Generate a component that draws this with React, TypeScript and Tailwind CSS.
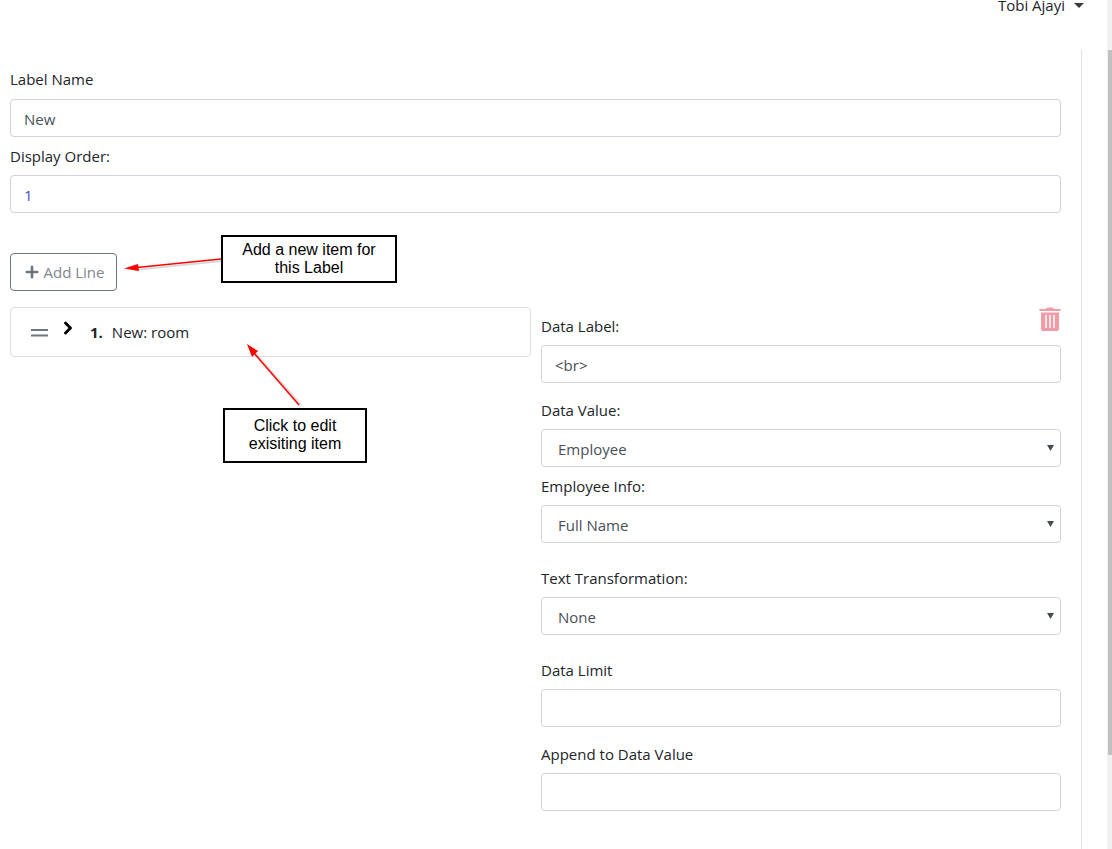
import { ChevronRight, Plus } from 'lucide-react'

const FONT = "font-['Open_Sans','Noto_Sans',sans-serif]"

function TextField({ value, className = '', valueClass = 'text-[#495057]' }: { value?: string; className?: string; valueClass?: string }) {
  return (
    <div className={`flex h-[38px] items-center rounded border border-[#ced4da] bg-white px-[13px] pt-[2px] text-[15px] ${valueClass} ${className}`}>
      {value}
    </div>
  )
}

function SelectField({ value, className = '' }: { value: string; className?: string }) {
  return (
    <div className={`flex h-[38px] items-center justify-between rounded border border-[#ced4da] bg-white pl-4 pr-[6px] text-[15px] text-[#495057] ${className}`}>
      <span className="pt-[2px]">{value}</span>
      <svg width="7" height="6" viewBox="0 0 7 6">
        <path d="M0 0h7L3.500 6z" fill="#444b52" />
      </svg>
    </div>
  )
}

function FieldLabel({ children, className = '' }: { children: string; className?: string }) {
  return <div className={`h-[22px] text-[15px] leading-[22px] text-[#212529] ${className}`}>{children}</div>
}

function Callout({ lines, className }: { lines: string[]; className: string }) {
  return (
    <div className={`absolute flex flex-col items-center justify-center border-2 border-black bg-white font-['Liberation_Sans',sans-serif] text-[16px] leading-[18px] text-black ${className}`}>
      {lines.map((line) => (
        <span key={line}>{line}</span>
      ))}
    </div>
  )
}

export default function App() {
  return (
    <div className={`relative h-[849px] overflow-hidden bg-white ${FONT}`}>
      {/* Page scrollbar */}
      <div className="absolute bottom-0 right-0 top-0 w-[5px] bg-[#f1f1f1]">
        <div className="absolute bottom-[94px] right-0 top-[50px] w-[4px] bg-[#c1c1c1]" />
      </div>

      {/* User menu */}
      <div className="flex h-[50px] justify-end pr-[28px]">
        <div className="-mt-[6px] flex h-[22px] items-center gap-[9px] text-[15px] text-[#212529]">
          <span>Tobi Ajayi</span>
          <svg width="10" height="5" viewBox="0 0 10 5">
            <path d="M0 0h10L5 5z" fill="#343a40" />
          </svg>
        </div>
      </div>

      <div className="mr-[30px] h-[799px] border-r border-[#dee2e6] pl-[10px] pr-5 pt-[18px]">
        {/* Label fields */}
        <FieldLabel>Label Name</FieldLabel>
        <TextField value="New" className="mt-[9px]" />
        <FieldLabel className="mt-2">Display Order:</FieldLabel>
        <TextField value="1" className="mt-2" valueClass="text-[#3f51b5]" />

        <button className="mt-10 flex h-[38px] w-[107px] items-center justify-center gap-[3px] rounded border border-[#6c757d] text-[15px] text-[#7f868d]">
          <Plus size={18} strokeWidth={3.5} className="text-[#6c757d]" />
          Add Line
        </button>

        <div className="mt-4 flex gap-[10px]">
          {/* Existing lines */}
          <div className="flex h-[50px] w-[521px] shrink-0 items-center rounded border border-[#dfdfdf] pl-5 text-[15px] text-[#212529]">
            <svg width="18" height="8" viewBox="0 0 18 8" className="mt-[2px]">
              <path d="M0 1h17M0 6.500h17" stroke="#6c757d" strokeWidth="2" />
            </svg>
            <ChevronRight size={20} strokeWidth={3.5} className="mb-[9px] ml-[9px] text-black" />
            <span className="ml-3 font-bold">1.</span>
            <span className="ml-[9px]">New: room</span>
          </div>

          {/* Line editor */}
          <div className="relative w-[520px] shrink-0 pt-2">
            <svg width="22" height="24" viewBox="0 0 22 24" className="absolute right-0 top-0">
              <path d="M8 0.500h6l1 1.500h6.500v2H0.500V2H7zM2 5.500h18V22a2 2 0 0 1-2 2H4a2 2 0 0 1-2-2z" fill="#f29aa5" />
              <path d="M7 8v13M11 8v13M15 8v13" stroke="#fff" strokeWidth="1.500" />
            </svg>
            <FieldLabel>Data Label:</FieldLabel>
            <TextField value="<br>" className="mt-2" />
            <FieldLabel className="mt-[16px]">Data Value:</FieldLabel>
            <SelectField value="Employee" className="mt-2" />
            <FieldLabel className="mt-2">Employee Info:</FieldLabel>
            <SelectField value="Full Name" className="mt-2" />
            <FieldLabel className="mt-6">Text Transformation:</FieldLabel>
            <SelectField value="None" className="mt-2" />
            <FieldLabel className="mt-6">Data Limit</FieldLabel>
            <TextField className="mt-2" />
            <FieldLabel className="mt-4">Append to Data Value</FieldLabel>
            <TextField className="mt-2" />
          </div>
        </div>
      </div>

      {/* Annotations */}
      <svg width="320" height="180" viewBox="0 0 320 180" className="absolute left-[110px] top-[250px]">
        <path d="M112 11L24 20" stroke="#000" strokeOpacity="0.15" strokeWidth="2" />
        <path d="M191 155L146 104" stroke="#000" strokeOpacity="0.15" strokeWidth="2" />
        <path d="M111 9L22 18" stroke="#f00" strokeWidth="1.500" />
        <path d="M14 18.500L28 14L29 21z" fill="#f00" />
        <path d="M189 155L143 102" stroke="#f00" strokeWidth="1.500" />
        <path d="M137 94L148 101L142 107z" fill="#f00" />
      </svg>
      <Callout lines={['Add a new item for', 'this Label']} className="left-[221px] top-[235px] h-[48px] w-[176px]" />
      <Callout lines={['Click to edit', 'exisiting item']} className="left-[223px] top-[408px] h-[55px] w-[144px] pb-[2px]" />
    </div>
  )
}
